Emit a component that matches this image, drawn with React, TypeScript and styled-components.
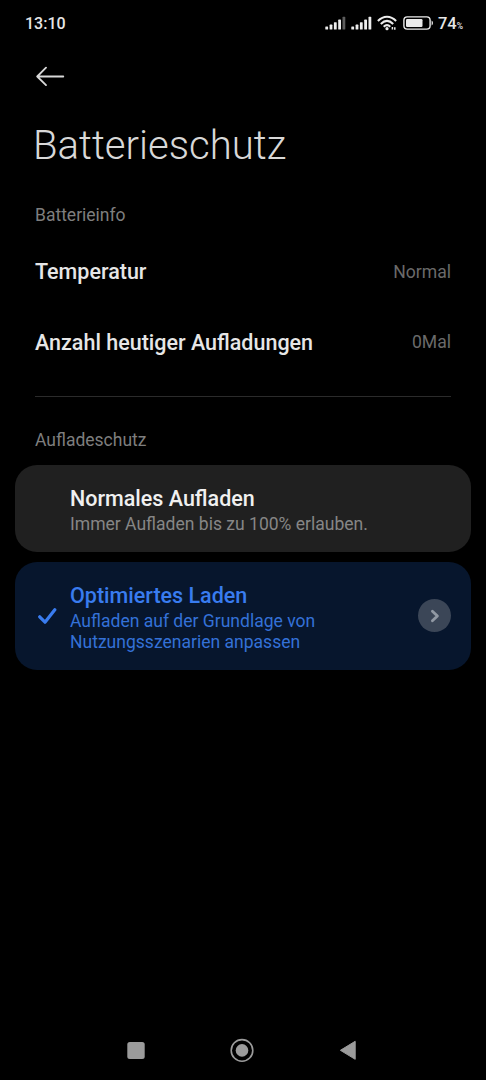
import React from 'react';
import styled, { createGlobalStyle } from 'styled-components';

const GlobalStyle = createGlobalStyle`
  * { box-sizing: border-box; }
  html, body { margin: 0; background: #000; }
  body { font-family: Roboto, sans-serif; color: #e6e6e6; }
`;

const Screen = styled.div`
  width: 486px;
  height: 1080px;
  display: flex;
  flex-direction: column;
  background: #000;
  overflow: hidden;
`;

const StatusBar = styled.div`
  height: 46px;
  padding: 0 23px 0 25px;
  display: flex;
  align-items: center;
  justify-content: space-between;
`;

const Clock = styled.span`
  font-size: 16px;
  line-height: 20px;
  padding-top: 2px;
  font-weight: 500;
`;

const StatusIcons = styled.div`
  display: flex;
  align-items: center;
  svg { display: block; }
`;

const Percent = styled.span`
  display: flex;
  align-items: baseline;
  font-size: 16.5px;
  line-height: 20px;
  padding-top: 1px;
  font-weight: 500;
  margin-left: 4px;
  small { font-size: 8.5px; line-height: 10px; }
`;

const TopBar = styled.div`
  height: 60px;
  padding-left: 35px;
  display: flex;
  align-items: center;
`;

const Title = styled.h1`
  margin: 0;
  height: 78px;
  line-height: 80px;
  padding-left: 33px;
  font-size: 40.1px;
  font-weight: 300;
  color: #d8d8d8;
`;

const SectionLabel = styled.h2<{ $height: number }>`
  margin: 0;
  padding-left: 35px;
  height: ${p => p.$height}px;
  line-height: 62px;
  font-size: 17.5px;
  font-weight: 400;
  color: #7e7e7e;
`;

const InfoRow = styled.div`
  height: 70.5px;
  padding: 0 35px;
  display: flex;
  align-items: center;
  justify-content: space-between;
`;

const InfoName = styled.span`
  font-size: 21.5px;
  font-weight: 500;
`;

const InfoValue = styled.span`
  font-size: 17.6px;
  color: #6a6a6a;
`;

const Divider = styled.div`
  height: 1px;
  margin: 18px 35px 12px;
  background: #2b2b2b;
`;

const Options = styled.div`
  display: flex;
  flex-direction: column;
  gap: 10px;
  padding: 0 15px;
  flex: 1;
`;

const Card = styled.div<{ $selected?: boolean; $height: number }>`
  height: ${p => p.$height}px;
  border-radius: 22px;
  padding: 0 20px 0 22px;
  display: flex;
  align-items: center;
  background: ${p => (p.$selected ? '#07162d' : '#202020')};
  color: ${p => (p.$selected ? '#397cef' : '#f0f0f0')};
`;

const CheckSlot = styled.div`
  width: 33px;
  flex: none;
  svg { display: block; }
`;

const CardText = styled.div`
  flex: 1;
  padding-top: 2px;
`;

const CardTitle = styled.div`
  font-size: 21.5px;
  line-height: 30px;
  font-weight: 500;
`;

const CardNote = styled.div<{ $selected?: boolean }>`
  font-size: 17.55px;
  line-height: 21px;
  color: ${p => (p.$selected ? '#3471d7' : '#868686')};
`;

const Chevron = styled.div`
  width: 33px;
  height: 33px;
  border-radius: 50%;
  background: #3b4657;
  display: flex;
  align-items: center;
  justify-content: center;
`;

const NavBar = styled.div`
  height: 60px;
  padding: 0 128px 0 126px;
  display: flex;
  align-items: center;
  justify-content: space-between;
  svg { display: block; }
`;

const Signal = ({ dimLast }: { dimLast?: boolean }) => (
  <svg width="26" height="16" viewBox="0 0 26 16" fill="#ececec">
    <rect x="0.3" y="11.4" width="2.8" height="3.2" rx="0.6" />
    <rect x="4.6" y="9.6" width="2.8" height="5" rx="0.6" />
    <rect x="8.9" y="7.2" width="2.8" height="7.4" rx="0.6" />
    <rect x="13.2" y="4.6" width="2.8" height="10" rx="0.6" />
    <rect x="17.5" y="1.8" width="2.8" height="12.8" rx="0.6" fill={dimLast ? '#5c5c5c' : '#ececec'} />
  </svg>
);

const Wifi = () => (
  <svg width="21" height="16" viewBox="0 0 21 16" fill="none" stroke="#ececec" strokeWidth="2.1">
    <path d="M0.9 5.9C6.4 0.3 13.6 0.3 19.1 5.9" />
    <path d="M3.8 8.9C7.8 5 12.2 5 16.2 8.9" />
    <path d="M6.7 11.7C9 9.6 11 9.6 13.3 11.7" />
    <circle cx="10" cy="13.7" r="1.6" fill="#ececec" stroke="none" />
    <path d="M15.4 12v2.6M17.8 12.2v2.6" strokeWidth="1.5" />
  </svg>
);

const Battery = () => (
  <svg width="31" height="14" viewBox="0 0 31 14">
    <rect x="0.9" y="0.9" width="26.2" height="12.2" rx="3.4" fill="none" stroke="#ececec" strokeWidth="1.4" />
    <rect x="3" y="3" width="16.5" height="8" rx="1.2" fill="#ececec" />
    <path d="M28.6 4.6q1.4 0.6 1.4 2.4t-1.4 2.4z" fill="#ececec" />
  </svg>
);

const Gap = styled.span`
  width: 5px;
`;

export default function App() {
  return (
    <>
      <GlobalStyle />
      <Screen>
        <StatusBar>
          <Clock>13:10</Clock>
          <StatusIcons>
            <Signal dimLast />
            <Signal />
            <Wifi />
            <Gap />
            <Battery />
            <Percent>74<small>%</small></Percent>
          </StatusIcons>
        </StatusBar>
        <TopBar>
          <svg width="30" height="20" viewBox="0 0 30 20" fill="none" stroke="#d8d8d8" strokeWidth="1.8" strokeLinecap="round" strokeLinejoin="round">
            <path d="M28.3 10.5H2.2M11 1.7L2.2 10.5l8.8 8.6" />
          </svg>
        </TopBar>
        <Title>Batterieschutz</Title>
        <SectionLabel $height={52.5}>Batterieinfo</SectionLabel>
        <InfoRow>
          <InfoName>Temperatur</InfoName>
          <InfoValue>Normal</InfoValue>
        </InfoRow>
        <InfoRow>
          <InfoName>Anzahl heutiger Aufladungen</InfoName>
          <InfoValue>0Mal</InfoValue>
        </InfoRow>
        <Divider />
        <SectionLabel $height={56}>Aufladeschutz</SectionLabel>
        <Options>
          <Card $height={87}>
            <CheckSlot />
            <CardText>
              <CardTitle>Normales Aufladen</CardTitle>
              <CardNote>Immer Aufladen bis zu 100% erlauben.</CardNote>
            </CardText>
          </Card>
          <Card $height={108} $selected>
            <CheckSlot>
              <svg width="20" height="18" viewBox="0 0 20 18" fill="none" stroke="#397cef" strokeWidth="3.2" strokeLinecap="round" strokeLinejoin="round">
                <path d="M2.7 9.8l5.3 5.4L17.8 2.8" />
              </svg>
            </CheckSlot>
            <CardText>
              <CardTitle>Optimiertes Laden</CardTitle>
              <CardNote $selected>Aufladen auf der Grundlage von<br />Nutzungsszenarien anpassen</CardNote>
            </CardText>
            <Chevron>
              <svg width="10" height="14" viewBox="0 0 10 14" fill="none" stroke="#9199a4" strokeWidth="2.8" strokeLinecap="round" strokeLinejoin="round">
                <path d="M2.4 2.2L7.4 7l-5 4.8" />
              </svg>
            </Chevron>
          </Card>
        </Options>
        <NavBar>
          <svg width="20" height="20" viewBox="0 0 20 20"><rect x="1.3" y="2" width="17.4" height="17" rx="2.5" fill="#9b9b9b" /></svg>
          <svg width="24" height="24" viewBox="0 0 24 24">
            <circle cx="12" cy="12.4" r="10.8" fill="none" stroke="#9b9b9b" strokeWidth="1.6" />
            <circle cx="12" cy="12.4" r="6.3" fill="#9b9b9b" />
          </svg>
          <svg width="20" height="20" viewBox="0 0 20 20"><path d="M17.2 1.3v18L2.4 10.3z" fill="#9b9b9b" stroke="#9b9b9b" strokeWidth="1" strokeLinejoin="round" /></svg>
        </NavBar>
      </Screen>
    </>
  );
}
